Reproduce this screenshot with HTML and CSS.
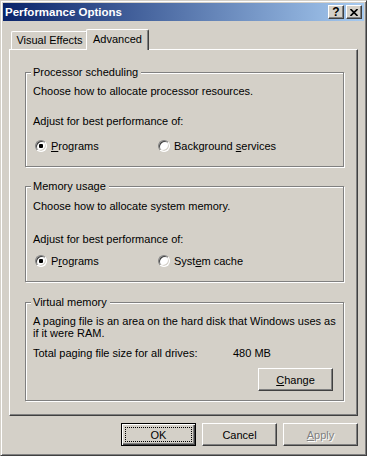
FILE: index.html
```html
<!DOCTYPE html>
<html lang="en">
<head>
    <meta charset="UTF-8">
    <meta name="viewport" content="width=device-width, initial-scale=1.0">
    <title>Performance Options</title>
    <link rel="stylesheet" href="styles.css">
</head>
<body>
    <div class="window">
        <div class="titlebar">
            <span class="title">Performance Options</span>
            <div class="caption-buttons">
                <span class="cap-btn cap-help">?</span>
                <span class="cap-btn">
                    <svg width="8" height="7" viewBox="0 0 8 7"><path d="M0.5 0 L7.5 7 M7.5 0 L0.5 7" stroke="#000" stroke-width="1.6" fill="none"/></svg>
                </span>
            </div>
        </div>

        <div class="tabs">
            <div class="tab">Visual Effects</div>
            <div class="tab tab-active">Advanced</div>
        </div>

        <div class="panel">
            <div class="group group-proc">
                <div class="legend">Processor scheduling</div>
                <p class="line mt6">Choose how to allocate processor resources.</p>
                <p class="line mt17">Adjust for best performance of:</p>
                <div class="radios mt11">
                    <label class="radio-item"><span class="radio checked"></span><span><u>P</u>rograms</span></label>
                    <label class="radio-item"><span class="radio"></span><span>Background <u>s</u>ervices</span></label>
                </div>
            </div>

            <div class="group group-mem">
                <div class="legend">Memory usage</div>
                <p class="line mt7">Choose how to allocate system memory.</p>
                <p class="line mt20">Adjust for best performance of:</p>
                <div class="radios mt8">
                    <label class="radio-item"><span class="radio checked"></span><span>P<u>r</u>ograms</span></label>
                    <label class="radio-item"><span class="radio"></span><span>Syst<u>e</u>m cache</span></label>
                </div>
            </div>

            <div class="group group-virt">
                <div class="legend">Virtual memory</div>
                <p class="para mt6">A paging file is an area on the hard disk that Windows uses as<br>if it were RAM.</p>
                <div class="total mt8">
                    <span class="total-label">Total paging file size for all drives:</span>
                    <span>480 MB</span>
                </div>
                <div class="change-row mt8">
                    <button class="btn"><u>C</u>hange</button>
                </div>
            </div>
        </div>

        <div class="buttons">
            <button class="btn btn-default"><span class="focus">OK</span></button>
            <button class="btn">Cancel</button>
            <button class="btn btn-disabled"><u>A</u>pply</button>
        </div>
    </div>
</body>
</html>
```

FILE: styles.css
```css
* { box-sizing: border-box; }
body { margin: 0; background: #d4d0c8; font-family: "Liberation Sans", Arial, sans-serif; font-size: 11px; color: #000; }

.window { width: 367px; height: 456px; padding: 2px; border: 1px solid; border-color: #d4d0c8 #404040 #404040 #d4d0c8; box-shadow: inset 1px 1px #fff, inset -1px -1px #808080; }

.titlebar { height: 18px; display: flex; align-items: center; justify-content: space-between; padding: 0 2px; background: linear-gradient(to right, #0a246a, #a6caf0); color: #fff; }
.title { font-weight: bold; font-size: 11.5px; }
.caption-buttons { display: flex; gap: 2px; }
.cap-btn { width: 16px; height: 14px; display: flex; align-items: center; justify-content: center; background: #d4d0c8; border: 1px solid; border-color: #fff #404040 #404040 #fff; box-shadow: inset -1px -1px #808080; color: #000; }
.cap-help { font-weight: bold; font-size: 12px; line-height: 12px; }

.tabs { display: flex; align-items: flex-end; height: 20px; margin: 8px 0 0 6px; }
.tab { width: 77px; height: 18px; margin-left: 2px; line-height: 16px; text-align: center; border: 1px solid; border-bottom: none; border-color: #fff #404040 #fff #fff; box-shadow: inset -1px 0 #808080; border-radius: 2px 2px 0 0; }
.tab-active { position: relative; width: 63px; height: 21px; margin: 0 0 -1px -2px; line-height: 18px; background: #d4d0c8; }

.panel { width: 349px; height: 367px; margin-left: 6px; padding: 22px 13px 0 15px; border: 1px solid; border-color: #fff #404040 #404040 #fff; box-shadow: inset -1px -1px #808080; }

.group { border: 1px solid #808080; box-shadow: 1px 1px #fff, inset 1px 1px #fff; padding: 0 7px; }
.group-proc { height: 95px; }
.group-mem { height: 96px; margin-top: 19px; }
.group-virt { height: 99px; margin-top: 20px; }
.legend { width: fit-content; margin: -7px 0 0 -2px; padding: 0 3px 0 2px; line-height: 13px; background: #d4d0c8; }

.line { margin: 0; line-height: 13px; white-space: nowrap; }
.para { margin: 0; line-height: 12px; white-space: nowrap; }
.mt6 { margin-top: 6px; }
.mt7 { margin-top: 7px; }
.mt8 { margin-top: 8px; }
.mt11 { margin-top: 11px; }
.mt17 { margin-top: 17px; }
.mt20 { margin-top: 20px; }

.radios { display: flex; height: 13px; margin-left: 2px; }
.radio-item { display: flex; align-items: center; gap: 4px; width: 123px; white-space: nowrap; }
.radio { position: relative; width: 12px; height: 12px; flex: none; border-radius: 50%; background: #fff; border: 1px solid; border-color: #808080 #fff #fff #808080; box-shadow: inset 1px 1px #404040, inset -1px -1px #d4d0c8; }
.radio.checked::after { content: ""; position: absolute; left: 3px; top: 3px; width: 4px; height: 4px; border-radius: 1px; background: #000; }

.total { display: flex; line-height: 13px; }
.total-label { width: 200px; white-space: nowrap; }
.change-row { display: flex; justify-content: flex-end; padding-right: 3px; }

.btn { width: 75px; height: 23px; padding: 0; display: flex; align-items: center; justify-content: center; font: inherit; color: #000; background: #d4d0c8; border: 1px solid; border-color: #fff #404040 #404040 #fff; box-shadow: inset -1px -1px #808080; }
.btn-default { border-color: #000; box-shadow: inset 1px 1px #fff, inset -1px -1px #404040, inset -2px -2px #808080; }
.focus { width: 67px; height: 15px; display: flex; align-items: center; justify-content: center; border: 1px dotted #000; }
.btn-disabled { color: #808080; text-shadow: 1px 1px #fff; }

.buttons { display: flex; justify-content: flex-end; gap: 6px; width: 349px; margin: 7px 0 0 6px; }
```
